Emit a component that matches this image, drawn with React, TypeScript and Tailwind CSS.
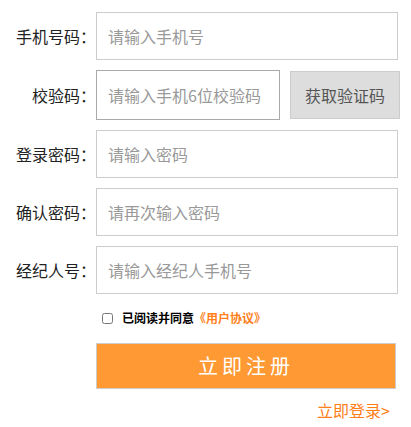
export default function App() {
  const rows = [
    { label: "手机号码：", placeholder: "请输入手机号" },
  ];
  const rest = [
    { label: "登录密码：", placeholder: "请输入密码" },
    { label: "确认密码：", placeholder: "请再次输入密码" },
    { label: "经纪人号：", placeholder: "请输入经纪人手机号" },
  ];

  return (
    <div
      className="w-[411px] h-[427px] bg-white pt-[12px] text-[#222]"
      style={{ fontFamily: '"Microsoft YaHei", "Noto Sans CJK SC", sans-serif' }}
    >
      <div className="flex flex-col gap-[10px]">
        {rows.map((r) => (
          <div key={r.label} className="flex items-center">
            <label className="w-[96px] text-right text-[16px]">{r.label}</label>
            <input
              className="w-[302px] h-[48px] border border-[#cccccc] pl-[11px] text-[16px] outline-none placeholder:text-[#999999]"
              placeholder={r.placeholder}
            />
          </div>
        ))}

        {/* 校验码 */}
        <div className="flex items-center">
          <label className="w-[96px] text-right text-[16px]">校验码：</label>
          <input
            className="w-[184px] h-[50px] border border-[#aaaaaa] pl-[11px] text-[16px] outline-none placeholder:text-[#999999]"
            placeholder="请输入手机6位校验码"
          />
          <button className="ml-[10px] w-[110px] h-[48px] bg-[#dddddd] border border-[#cccccc] text-[16px] text-[#555555]">
            获取验证码
          </button>
        </div>

        {rest.map((r) => (
          <div key={r.label} className="flex items-center">
            <label className="w-[96px] text-right text-[16px]">{r.label}</label>
            <input
              className="w-[302px] h-[48px] border border-[#cccccc] pl-[11px] text-[16px] outline-none placeholder:text-[#999999]"
              placeholder={r.placeholder}
            />
          </div>
        ))}
      </div>

      {/* 协议 */}
      <div className="flex items-center h-[24px] mt-[12px] pl-[102px]">
        <input type="checkbox" className="w-[11px] h-[11px] m-0" />
        <span className="ml-[9px] text-[12px] font-bold text-black">已阅读并同意</span>
        <span className="text-[12px] font-bold text-[#ff7f1a]">《用户协议》</span>
      </div>

      <div className="flex pl-[96px] mt-[13px]">
        <button className="w-[300px] h-[46px] bg-[#ff9933] border border-[#cccccc] text-white text-[20px] tracking-[4px]">
          立即注册
        </button>
      </div>

      <div className="w-[390px] mt-[11px] text-right text-[16px] leading-[20px] text-[#ff7f1a]">
        立即登录&gt;
      </div>
    </div>
  );
}
